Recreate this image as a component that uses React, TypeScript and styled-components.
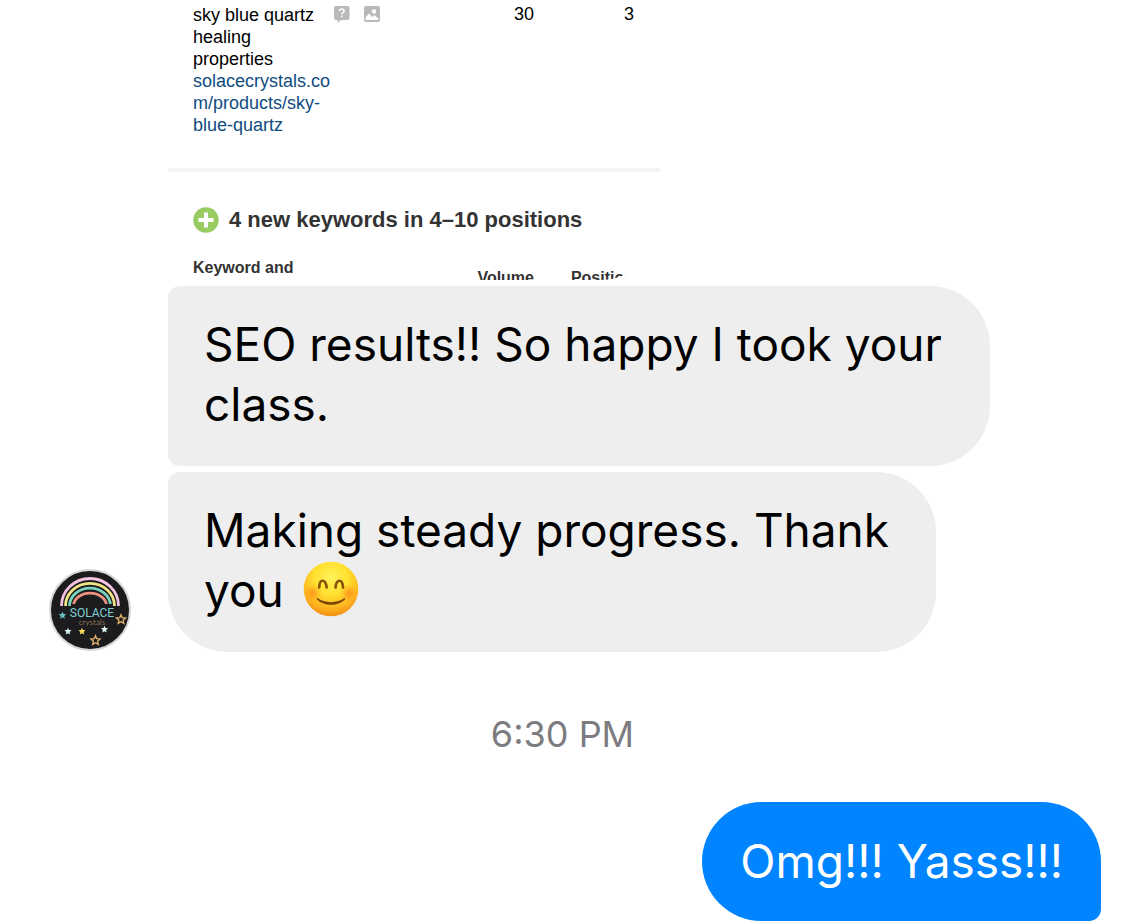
import React from "react";
import styled, { createGlobalStyle } from "styled-components";

const GlobalStyle = createGlobalStyle`
  *, *::before, *::after { box-sizing: border-box; }
  body {
    margin: 0;
    background: #fff;
    color: #000;
    font-family: Inter, "Liberation Sans", sans-serif;
  }
`;

const Chat = styled.main`
  display: flex;
  flex-direction: column;
`;

const Incoming = styled.section`
  display: flex;
  align-items: flex-end;
  gap: 37px;
  padding: 0 24px 0 49px;
`;

const Avatar = styled.svg`
  flex: none;
  width: 82px;
  height: 82px;
  margin-bottom: 1px;
`;

const Stack = styled.div`
  display: flex;
  flex: 1;
  min-width: 0;
  flex-direction: column;
  align-items: flex-start;
  gap: 6px;
`;

const Bubble = styled.p<{ $max?: number; $sent?: boolean; $last?: boolean }>`
  margin: 0;
  padding: ${(p) => (p.$sent ? "29px 38px 30px" : "28px 36px 32px")};
  max-width: ${(p) => (p.$max ? `${p.$max}px` : "100%")};
  font-size: 46px;
  line-height: 60px;
  color: ${(p) => (p.$sent ? "#fff" : "#000")};
  background: ${(p) => (p.$sent ? "#0084ff" : "#eee")};
  border-radius: ${(p) =>
    p.$sent ? "60px 60px 12px 60px" : p.$last ? "12px 60px 60px 60px" : "12px 60px 60px 12px"};
`;

const Emoji = styled.svg`
  width: 56px;
  height: 56px;
  margin-left: 6px;
  vertical-align: -10px;
`;

const Time = styled.time`
  margin: 60px 0 46px;
  text-align: center;
  font-size: 36px;
  line-height: 44px;
  color: #7c7c80;
`;

const Outgoing = styled.section`
  display: flex;
  justify-content: flex-end;
  padding-right: 24px;
`;

const Report = styled.article`
  width: 492px;
  max-width: 100%;
  height: 280px;
  overflow: hidden;
  border-radius: 0 0 60px 12px;
  font-family: "Liberation Sans", Arial, sans-serif;
`;

const Table = styled.table`
  width: 100%;
  table-layout: fixed;
  border-collapse: collapse;
`;

const KeywordCell = styled.td`
  width: 266px;
  padding: 4px 0 0 25px;
  vertical-align: top;
`;

const NumberCell = styled.td`
  width: 100px;
  padding: 3px 0 0;
  font-size: 18px;
  line-height: 22px;
  text-align: right;
  vertical-align: top;

  &:last-child { width: 126px; padding-right: 26px; }
`;

const Keyword = styled.div`
  display: flex;
  gap: 3px;
`;

const Phrase = styled.div`
  width: 138px;
  font-size: 18px;
  line-height: 22px;
`;

const PageLink = styled.a`
  display: block;
  color: #0f4c81;
  text-decoration: none;
  overflow-wrap: anywhere;
`;

const Badges = styled.div`
  display: flex;
  gap: 14px;
  padding-top: 2px;
`;

const Badge = styled.svg`
  width: 16px;
  height: 16px;
  overflow: visible;
`;

const Divider = styled.hr`
  height: 4px;
  margin: 32px 0 33px;
  border: 0;
  background: #f4f4f4;
`;

const Heading = styled.h2`
  display: flex;
  align-items: center;
  gap: 10px;
  margin: 0 0 23px;
  padding-left: 25px;
  font-size: 22px;
  line-height: 30px;
  color: #333;
`;

const Plus = styled.svg`
  width: 26px;
  height: 26px;
`;

const HeaderCell = styled.th`
  width: 100px;
  height: 40px;
  padding: 0;
  font-size: 16px;
  line-height: 20px;
  text-align: right;
  color: #333;

  &:first-child { width: 266px; padding-left: 25px; text-align: left; vertical-align: top; }
  &:last-child { width: 126px; padding-right: 26px; }
`;

function starPoints(cx: number, cy: number, r: number) {
  return Array.from({ length: 10 }, (_, i) => {
    const a = (Math.PI / 5) * i - Math.PI / 2;
    const d = i % 2 ? r * 0.45 : r;
    return `${(cx + d * Math.cos(a)).toFixed(2)},${(cy + d * Math.sin(a)).toFixed(2)}`;
  }).join(" ");
}

const arcs = [
  { rx: 28.5, ry: 27.5, color: "#f5c3e2" },
  { rx: 24.5, ry: 22.7, color: "#f3e685" },
  { rx: 20.5, ry: 17.8, color: "#7ad3bd" },
  { rx: 16.5, ry: 12.8, color: "#ee9280" },
];

const stars = [
  { x: 13.5, y: 46.5, r: 4, fill: "#63c5c0" },
  { x: 19, y: 62.5, r: 3.8, fill: "#d8f3f5" },
  { x: 33, y: 62.5, r: 3.8, fill: "#f6d95c" },
  { x: 55.5, y: 60.5, r: 3.8, fill: "#e4f6f5" },
  { x: 72, y: 50.5, r: 4.8, stroke: "#e2b56c" },
  { x: 46.5, y: 71.5, r: 4.8, stroke: "#e2b56c" },
];

function SolaceAvatar() {
  return (
    <Avatar viewBox="0 0 82 82" role="img" aria-label="Solace Crystals">
      <circle cx="41" cy="41" r="40" fill="#1c1b1d" stroke="#d6d6d6" strokeWidth="2" />
      {arcs.map((a) => (
        <path
          key={a.color}
          d={`M${41 - a.rx} 37A${a.rx} ${a.ry} 0 0 1 ${41 + a.rx} 37`}
          fill="none"
          stroke={a.color}
          strokeWidth="2.8"
        />
      ))}
      <rect x="22" y="35" width="41" height="15" fill="#1c1b1d" />
      <text x="43" y="48" textAnchor="middle" fontFamily="Roboto, sans-serif" fontSize="12" fill="#7fd0d3">
        SOLACE
      </text>
      <text x="43" y="56" textAnchor="middle" fontFamily="Lato, sans-serif" fontSize="8" fill="#8a7059">
        crystals
      </text>
      {stars.map((s) => (
        <polygon key={`${s.x}`} points={starPoints(s.x, s.y, s.r)} fill={s.fill ?? "none"} stroke={s.stroke} strokeWidth="1.3" />
      ))}
    </Avatar>
  );
}

function SmilingFace() {
  return (
    <Emoji viewBox="0 0 56 56" role="img" aria-label="smiling face with smiling eyes">
      <defs>
        <radialGradient id="face" cx="50%" cy="30%" r="70%">
          <stop offset="0" stopColor="#fff35c" />
          <stop offset="0.45" stopColor="#ffe02e" />
          <stop offset="0.8" stopColor="#fdb41f" />
          <stop offset="1" stopColor="#f28d13" />
        </radialGradient>
        <radialGradient id="blush">
          <stop offset="0" stopColor="#ff7a1a" stopOpacity="0.65" />
          <stop offset="1" stopColor="#ff8a1a" stopOpacity="0" />
        </radialGradient>
      </defs>
      <circle cx="28" cy="28" r="27.3" fill="url(#face)" />
      <circle cx="10" cy="32" r="9" fill="url(#blush)" />
      <circle cx="46" cy="32" r="9" fill="url(#blush)" />
      <g fill="none" stroke="#8a5208" strokeWidth="2.7" strokeLinecap="round">
        <path d="M16.200 26.500C16.500 17.500 22.500 17.500 23.700 26.500" />
        <path d="M32.500 26.500C33.500 17.500 39.500 17.500 40 26.500" />
      </g>
      <path d="M14.500 37C21 42.500 35 42.500 41.500 37C42 36.800 42.500 37.500 42 38.200C36 45.500 20 45.500 14 38.200C13.500 37.500 14 36.800 14.500 37Z" fill="#7b4607" />
    </Emoji>
  );
}

function SeoReport() {
  return (
    <Report>
      <Table>
        <tbody>
          <tr>
            <KeywordCell>
              <Keyword>
                <Phrase>
                  sky blue quartz healing properties
                  <PageLink href="#sky-blue-quartz">solacecrystals.com/products/sky-blue-quartz</PageLink>
                </Phrase>
                <Badges>
                  <Badge viewBox="0 0 16 16" aria-label="Question results">
                    <path d="M2 0H13.500Q15.500 0 15.500 2V12Q15.500 14 13.500 14H7L3.500 16.800V14H2Q0 14 0 12V2Q0 0 2 0Z" fill="#b9b9b9" />
                    <path d="M5.400 5Q5.600 3 7.800 3Q10.200 3.100 10.100 5Q10 6.200 8.600 6.900Q7.800 7.300 7.800 8.300M7.800 9.600V11.300" fill="none" stroke="#fff" strokeWidth="1.600" />
                  </Badge>
                  <Badge viewBox="0 0 16 16" aria-label="Image results">
                    <rect width="16" height="16" rx="2" fill="#b9b9b9" />
                    <circle cx="10" cy="5.500" r="2.200" fill="#fff" />
                    <path d="M1.500 14V11.500L5 7.500L8.500 11L10.500 9.300L14.500 12.500V14Z" fill="#fff" />
                  </Badge>
                </Badges>
              </Keyword>
            </KeywordCell>
            <NumberCell>30</NumberCell>
            <NumberCell>3</NumberCell>
          </tr>
        </tbody>
      </Table>
      <Divider />
      <Heading>
        <Plus viewBox="0 0 26 26" aria-hidden="true">
          <circle cx="13" cy="13" r="12.700" fill="#98cb62" />
          <path d="M13 5.500V20.500M5.500 13H20.500" stroke="#fff" strokeWidth="4" />
        </Plus>
        4 new keywords in 4–10 positions
      </Heading>
      <Table>
        <thead>
          <tr>
            <HeaderCell scope="col">Keyword and</HeaderCell>
            <HeaderCell scope="col">Volume</HeaderCell>
            <HeaderCell scope="col">Position</HeaderCell>
          </tr>
        </thead>
      </Table>
    </Report>
  );
}

export default function App() {
  return (
    <>
      <GlobalStyle />
      <Chat>
        <Incoming>
          <SolaceAvatar />
          <Stack>
            <SeoReport />
            <Bubble $max={822}>SEO results!! So happy I took your class.</Bubble>
            <Bubble $max={768} $last>
              Making steady progress. Thank you <SmilingFace />
            </Bubble>
          </Stack>
        </Incoming>
        <Time dateTime="18:30">6:30 PM</Time>
        <Outgoing>
          <Bubble $sent>Omg!!! Yasss!!!</Bubble>
        </Outgoing>
      </Chat>
    </>
  );
}
